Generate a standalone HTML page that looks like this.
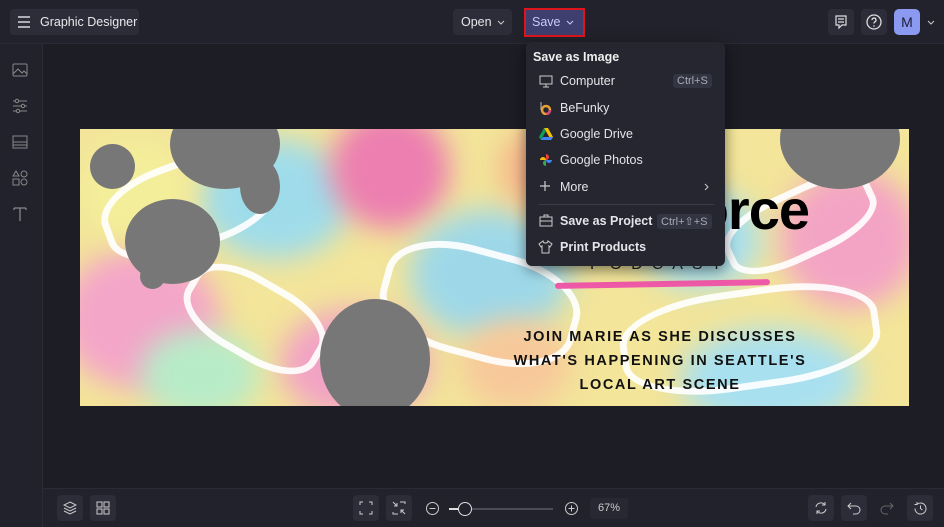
<!DOCTYPE html>
<html><head><meta charset="utf-8"><style>
*{box-sizing:border-box;margin:0;padding:0}
body{width:944px;height:527px;overflow:hidden;background:#1c1d25;font-family:"Liberation Sans",sans-serif;color:#e6e6ea;position:relative}
.top{position:absolute;left:0;top:0;width:944px;height:44px;background:#21222b;border-bottom:1px solid #2a2b35}
.side{position:absolute;left:0;top:44px;width:43px;height:483px;background:#21222b;border-right:1px solid #2a2b35}
.bot{position:absolute;left:43px;top:488px;width:901px;height:39px;background:#21222b;border-top:1px solid #2a2b35}
.btn{position:absolute;background:#2c2d38;border-radius:4px}
.ib{position:absolute;width:26px;height:26px;background:#2c2d38;border-radius:4px;display:flex;align-items:center;justify-content:center}
svg{display:block}
.canvas{position:absolute;left:80px;top:129px;width:829px;height:277px;overflow:hidden;background:#f3e59a}
.b{position:absolute;border-radius:50%;filter:blur(14px)}
.g{position:absolute;border-radius:50%;background:#777}
.w{position:absolute;border:7px solid #fff;border-radius:40%;opacity:.9}
.menu{position:absolute;left:526px;top:42px;width:199px;height:224px;background:#25262f;border-radius:6px;box-shadow:0 4px 14px rgba(0,0,0,.5)}
.mi{position:absolute;left:34px;font-size:12.5px;color:#e4e4ea}
.kb{position:absolute;background:#343543;border-radius:3px;font-size:11px;color:#a8a9b5;padding:1px 4px}
</style></head><body>
<div class="top"></div>
<div class="btn" style="left:10px;top:9px;width:129px;height:26px"></div>
<svg style="position:absolute;left:17px;top:15px" width="14" height="14"><path d="M1 2h12M1 7h12M1 12h12" stroke="#d8d8de" stroke-width="1.4"/></svg>
<div style="position:absolute;left:40px;top:15px;font-size:12.5px;color:#e8e8ec">Graphic Designer</div>
<div class="btn" style="left:453px;top:9px;width:59px;height:26px"></div>
<div style="position:absolute;left:461px;top:15px;font-size:12.5px">Open</div>
<svg style="position:absolute;left:497px;top:20px" width="8" height="5"><path d="M1 1l3 3 3-3" stroke="#ccc" fill="none"/></svg>
<div style="position:absolute;left:524px;top:8px;width:61px;height:29px;border:2px solid #e0141c;background:#3e3f6e"></div>
<div style="position:absolute;left:532px;top:15px;font-size:12.5px;color:#c9caf5">Save</div>
<svg style="position:absolute;left:566px;top:20px" width="8" height="5"><path d="M1 1l3 3 3-3" stroke="#c9caf5" fill="none"/></svg>
<div class="ib" style="left:828px;top:9px"><svg width="14" height="14"><path d="M2 1h10v9H8l-3 3v-3H2z M4 4h6M4 7h6" stroke="#ddd" fill="none" stroke-width="1.2"/></svg></div>
<div class="ib" style="left:861px;top:9px"><svg width="16" height="16"><circle cx="8" cy="8" r="7" stroke="#ddd" fill="none" stroke-width="1.3"/><path d="M6 6a2 2 0 1 1 2.5 2c-.5.3-.5.7-.5 1.5" stroke="#ddd" fill="none" stroke-width="1.3"/><circle cx="8" cy="12" r=".8" fill="#ddd"/></svg></div>
<div style="position:absolute;left:894px;top:9px;width:26px;height:26px;background:#8c99f0;border-radius:5px;color:#1c1d35;font-size:14px;text-align:center;line-height:26px">M</div>
<svg style="position:absolute;left:927px;top:20px" width="8" height="5"><path d="M1 1l3 3 3-3" stroke="#ccc" fill="none"/></svg>

<div class="side"></div>
<svg style="position:absolute;left:12px;top:62px" width="16" height="16"><rect x="1" y="2" width="14" height="12" rx="1" stroke="#888" fill="none"/><path d="M1 12l5-5 4 4 2-2 3 3" stroke="#888" fill="none"/></svg>
<svg style="position:absolute;left:12px;top:98px" width="16" height="16"><path d="M1 3h14M1 8h14M1 13h14" stroke="#888"/><circle cx="5" cy="3" r="1.7" fill="#21222b" stroke="#888"/><circle cx="11" cy="8" r="1.7" fill="#21222b" stroke="#888"/><circle cx="6" cy="13" r="1.7" fill="#21222b" stroke="#888"/></svg>
<svg style="position:absolute;left:12px;top:134px" width="16" height="16"><rect x="1" y="2" width="14" height="12" stroke="#888" fill="none"/><path d="M1 8h14M1 11h14" stroke="#888"/></svg>
<svg style="position:absolute;left:12px;top:170px" width="16" height="16"><path d="M4 1l3 5H1z" stroke="#888" fill="none"/><circle cx="12" cy="4" r="3" stroke="#888" fill="none"/><rect x="1" y="9" width="6" height="6" stroke="#888" fill="none"/><circle cx="12" cy="12" r="3" stroke="#888" fill="none"/></svg>
<svg style="position:absolute;left:12px;top:206px" width="16" height="16"><path d="M2 2h12M8 2v13M2 2v2M14 2v2" stroke="#888" stroke-width="1.3"/></svg>

<div class="canvas">
<div class="b" style="left:-20px;top:120px;width:160px;height:140px;background:#f4a6c8"></div>
<div class="b" style="left:120px;top:10px;width:150px;height:120px;background:#9fdcea"></div>
<div class="b" style="left:250px;top:-20px;width:120px;height:120px;background:#ec7eb0"></div>
<div class="b" style="left:330px;top:80px;width:160px;height:130px;background:#9ed8e8"></div>
<div class="b" style="left:420px;top:-10px;width:130px;height:100px;background:#f5b28a"></div>
<div class="b" style="left:0;top:10px;width:110px;height:100px;background:#f3ee9a"></div>
<div class="b" style="left:200px;top:180px;width:150px;height:110px;background:#f1a2c4"></div>
<div class="b" style="left:600px;top:200px;width:180px;height:100px;background:#a8e0f0"></div>
<div class="b" style="left:700px;top:40px;width:140px;height:140px;background:#f3a4c4"></div>
<div class="b" style="left:60px;top:200px;width:120px;height:90px;background:#b7ebc8"></div>
<div class="b" style="left:560px;top:60px;width:120px;height:100px;background:#a6dff0"></div>
<div class="b" style="left:380px;top:190px;width:110px;height:90px;background:#f7c89a"></div>
<div class="w" style="left:20px;top:30px;width:180px;height:90px;transform:rotate(-20deg)"></div>
<div class="w" style="left:300px;top:120px;width:200px;height:110px;transform:rotate(15deg)"></div>
<div class="w" style="left:540px;top:160px;width:260px;height:100px;transform:rotate(-8deg)"></div>
<div class="w" style="left:100px;top:150px;width:150px;height:80px;transform:rotate(30deg)"></div>
<div class="w" style="left:640px;top:60px;width:160px;height:70px;transform:rotate(-25deg)"></div>
<div class="g" style="left:90px;top:-30px;width:110px;height:90px"></div>
<div class="g" style="left:45px;top:70px;width:95px;height:85px"></div>
<div class="g" style="left:10px;top:15px;width:45px;height:45px"></div>
<div class="g" style="left:160px;top:30px;width:40px;height:55px"></div>
<div class="g" style="left:60px;top:135px;width:25px;height:25px"></div>
<div class="g" style="left:240px;top:170px;width:110px;height:120px"></div>
<div class="g" style="left:700px;top:-40px;width:120px;height:100px"></div>
<div style="position:absolute;right:100px;top:48px;font:900 56px 'Liberation Sans',sans-serif;color:#000;letter-spacing:-1px;white-space:nowrap">Artforce</div>
<div style="position:absolute;left:510px;top:127px;font:16px 'Liberation Sans',sans-serif;color:#222;letter-spacing:9px">PODCAST</div>
<div style="position:absolute;left:475px;top:152px;width:215px;height:6px;background:#ef5aa8;border-radius:3px;transform:rotate(-1deg)"></div>
<div style="position:absolute;left:400px;top:196px;width:360px;text-align:center;font:bold 14.5px/24px 'Liberation Sans',sans-serif;color:#111;letter-spacing:1.6px">JOIN MARIE AS SHE DISCUSSES<br>WHAT'S HAPPENING IN SEATTLE'S<br>LOCAL ART SCENE</div>
</div>

<div class="menu">
<div style="position:absolute;left:7px;top:8px;font-size:12.5px;font-weight:bold;color:#eee">Save as Image</div>
<svg style="position:absolute;left:13px;top:33px" width="14" height="13"><rect x="1" y="1" width="12" height="8" stroke="#ccc" fill="none"/><path d="M4 12h6M7 9v3" stroke="#ccc"/></svg>
<div class="mi" style="top:32px">Computer</div><div class="kb" style="left:147px;top:32px">Ctrl+S</div>
<svg style="position:absolute;left:13px;top:59px" width="14" height="14"><circle cx="7" cy="9" r="4" fill="none" stroke="#e9a030" stroke-width="2.5"/><circle cx="7" cy="9" r="4" fill="none" stroke="#d84880" stroke-width="2.5" stroke-dasharray="6 20"/><path d="M2 1v8" stroke="#bbb"/></svg>
<div class="mi" style="top:59px">BeFunky</div>
<svg style="position:absolute;left:13px;top:85px" width="14" height="13"><path d="M5 1h4l5 9-2 3z" fill="#fbbc04"/><path d="M5 1L0 10l2 3 5-9z" fill="#0f9d58"/><path d="M2 13h10l2-3H4z" fill="#4285f4"/></svg>
<div class="mi" style="top:85px">Google Drive</div>
<svg style="position:absolute;left:13px;top:111px" width="14" height="14"><path d="M7 7V1a3 3 0 0 1 0 6z" fill="#ea4335"/><path d="M7 7h6a3 3 0 0 1-6 0z" fill="#4285f4"/><path d="M7 7v6a3 3 0 0 1 0-6z" fill="#34a853"/><path d="M7 7H1a3 3 0 0 1 6 0z" fill="#fbbc04"/></svg>
<div class="mi" style="top:111px">Google Photos</div>
<svg style="position:absolute;left:13px;top:138px" width="12" height="12"><path d="M6 1v10M1 6h10" stroke="#ccc" stroke-width="1.2"/></svg>
<div class="mi" style="top:138px">More</div>
<svg style="position:absolute;left:178px;top:141px" width="6" height="8"><path d="M1 1l3 3-3 3" stroke="#ccc" fill="none"/></svg>
<div style="position:absolute;left:12px;top:162px;width:176px;height:1px;background:#3a3b47"></div>
<svg style="position:absolute;left:13px;top:172px" width="14" height="13"><rect x="1" y="3" width="12" height="9" stroke="#ccc" fill="none"/><path d="M5 3V1h4v2M1 7h12" stroke="#ccc" fill="none"/></svg>
<div class="mi" style="top:172px;font-weight:bold">Save as Project</div><div class="kb" style="left:131px;top:172px">Ctrl+⇧+S</div>
<svg style="position:absolute;left:12px;top:198px" width="15" height="14"><path d="M5 1L1 4l2 3 1-1v7h7V6l1 1 2-3-4-3c0 1.5-1 2-2.5 2S5 2.5 5 1z" stroke="#ccc" fill="none"/></svg>
<div class="mi" style="top:198px;font-weight:bold">Print Products</div>
</div>

<div class="bot"></div>
<div class="ib" style="left:57px;top:495px"><svg width="14" height="14"><path d="M7 1l6 3-6 3-6-3z M1 7l6 3 6-3M1 10l6 3 6-3" stroke="#ccc" fill="none"/></svg></div>
<div class="ib" style="left:90px;top:495px"><svg width="14" height="14"><rect x="1" y="1" width="5" height="5" stroke="#ccc" fill="none"/><rect x="8" y="1" width="5" height="5" stroke="#ccc" fill="none"/><rect x="1" y="8" width="5" height="5" stroke="#ccc" fill="none"/><rect x="8" y="8" width="5" height="5" stroke="#ccc" fill="none"/></svg></div>
<div class="ib" style="left:353px;top:495px"><svg width="14" height="14"><path d="M1 4V1h3M10 1h3v3M13 10v3h-3M4 13H1v-3" stroke="#ccc" fill="none"/></svg></div>
<div class="ib" style="left:386px;top:495px"><svg width="14" height="14"><path d="M1 1l4 4M5 2v3H2M13 13l-4-4M9 12V9h3M8 1h5v2M1 11v2h5" stroke="#ccc" fill="none"/></svg></div>
<svg style="position:absolute;left:425px;top:501px" width="15" height="15"><circle cx="7.5" cy="7.5" r="6" stroke="#ccc" fill="none"/><path d="M4.5 7.5h6" stroke="#ccc"/></svg>
<div style="position:absolute;left:449px;top:508px;width:104px;height:2px;background:#4a4b57"></div>
<div style="position:absolute;left:449px;top:508px;width:12px;height:2px;background:#ddd"></div>
<div style="position:absolute;left:458px;top:502px;width:14px;height:14px;border:1.5px solid #ddd;border-radius:50%;background:#21222b"></div>
<svg style="position:absolute;left:564px;top:501px" width="15" height="15"><circle cx="7.5" cy="7.5" r="6" stroke="#ccc" fill="none"/><path d="M4.5 7.5h6M7.5 4.5v6" stroke="#ccc"/></svg>
<div style="position:absolute;left:590px;top:498px;width:38px;height:21px;background:#272832;border-radius:3px;font-size:11px;color:#ccc;text-align:center;line-height:21px">67%</div>
<div class="ib" style="left:808px;top:495px"><svg width="14" height="14"><path d="M11 4A5 5 0 0 0 2 6M3 10a5 5 0 0 0 9-2M11 1v3H8M3 13v-3h3" stroke="#ccc" fill="none"/></svg></div>
<div class="ib" style="left:841px;top:495px"><svg width="14" height="14"><path d="M4 2L1 5l3 3M1 5h8a4 4 0 0 1 0 8H6" stroke="#ccc" fill="none"/></svg></div>
<div style="position:absolute;left:874px;top:495px;width:26px;height:26px;display:flex;align-items:center;justify-content:center"><svg width="14" height="14"><path d="M10 2l3 3-3 3M13 5H5a4 4 0 0 0 0 8h3" stroke="#666" fill="none"/></svg></div>
<div class="ib" style="left:907px;top:495px"><svg width="15" height="15"><path d="M2 7.5A5.5 5.5 0 1 0 4 3.3M4 1v2.5H1.5M7.5 4.5v3l2 1.5" stroke="#ccc" fill="none"/></svg></div>
</body></html>
